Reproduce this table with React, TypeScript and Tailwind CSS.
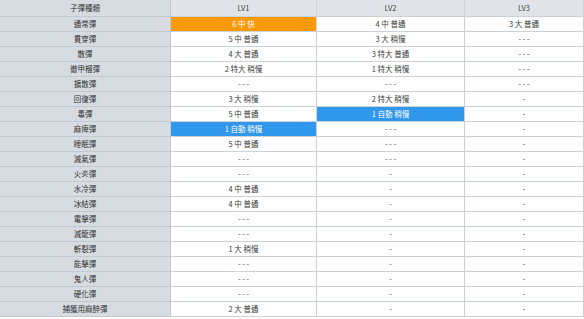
import React from "react";

type Cell = { t: string; c?: "o" | "b" };
const rows: [string, Cell, Cell, Cell][] = [
  ["通常彈", { t: "6 中 快", c: "o" }, { t: "4 中 普通" }, { t: "3 大 普通" }],
  ["貫穿彈", { t: "5 中 普通" }, { t: "3 大 稍慢" }, { t: "- - -" }],
  ["散彈", { t: "4 大 普通" }, { t: "3 特大 普通" }, { t: "- - -" }],
  ["徹甲榴彈", { t: "2 特大 稍慢" }, { t: "1 特大 稍慢" }, { t: "- - -" }],
  ["擴散彈", { t: "- - -" }, { t: "- - -" }, { t: "- - -" }],
  ["回復彈", { t: "3 大 稍慢" }, { t: "2 特大 稍慢" }, { t: "-" }],
  ["毒彈", { t: "5 中 普通" }, { t: "1 自動 稍慢", c: "b" }, { t: "-" }],
  ["麻痺彈", { t: "1 自動 稍慢", c: "b" }, { t: "- - -" }, { t: "-" }],
  ["睡眠彈", { t: "5 中 普通" }, { t: "- - -" }, { t: "-" }],
  ["滅氣彈", { t: "- - -" }, { t: "- - -" }, { t: "-" }],
  ["火炎彈", { t: "- - -" }, { t: "-" }, { t: "-" }],
  ["水冷彈", { t: "4 中 普通" }, { t: "-" }, { t: "-" }],
  ["冰結彈", { t: "4 中 普通" }, { t: "-" }, { t: "-" }],
  ["電擊彈", { t: "- - -" }, { t: "-" }, { t: "-" }],
  ["滅龍彈", { t: "- - -" }, { t: "-" }, { t: "-" }],
  ["斬裂彈", { t: "1 大 稍慢" }, { t: "-" }, { t: "-" }],
  ["能擊彈", { t: "- - -" }, { t: "-" }, { t: "-" }],
  ["鬼人彈", { t: "- - -" }, { t: "-" }, { t: "-" }],
  ["硬化彈", { t: "- - -" }, { t: "-" }, { t: "-" }],
  ["捕獲用麻醉彈", { t: "2 大 普通" }, { t: "-" }, { t: "-" }],
];

const font = {
  fontFamily: '"Noto Sans CJK TC", "Liberation Sans", sans-serif',
};

function DataCell({ cell }: { cell: Cell }) {
  const bg =
    cell.c === "o"
      ? "bg-[#fd9a0c] text-white"
      : cell.c === "b"
      ? "bg-[#2f97ec] text-white"
      : "bg-white text-[#3c3c3c]";
  return (
    <div
      className={`h-[15px] flex items-center justify-center border-b border-r border-[#cdd2d7] text-[7.5px] leading-none ${bg}`}
    >
      {cell.t}
    </div>
  );
}

export default function App() {
  return (
    <div className="w-[584px] h-[319px] bg-white overflow-hidden" style={font}>
      <div className="grid grid-cols-[171px_146px_148px_119px]">
        <div className="h-[17px] flex items-center justify-center bg-[#d6dce2] border-b border-r border-[#c3c9cf] text-[7.5px] text-[#333]">
          子彈種類
        </div>
        {["LV1", "LV2", "LV3"].map((h) => (
          <div
            key={h}
            className="h-[17px] flex items-center justify-center bg-[#e0e4e8] border-b border-r border-[#cdd2d7] text-[7.5px] text-[#444]"
          >
            {h}
          </div>
        ))}
        {rows.map(([name, a, b, c]) => (
          <React.Fragment key={name}>
            <div className="h-[15px] flex items-center justify-center bg-[#d6dce2] border-b border-r border-[#c3c9cf] text-[7.5px] leading-none text-[#333]">
              {name}
            </div>
            <DataCell cell={a} />
            <DataCell cell={b} />
            <DataCell cell={c} />
          </React.Fragment>
        ))}
      </div>
    </div>
  );
}
